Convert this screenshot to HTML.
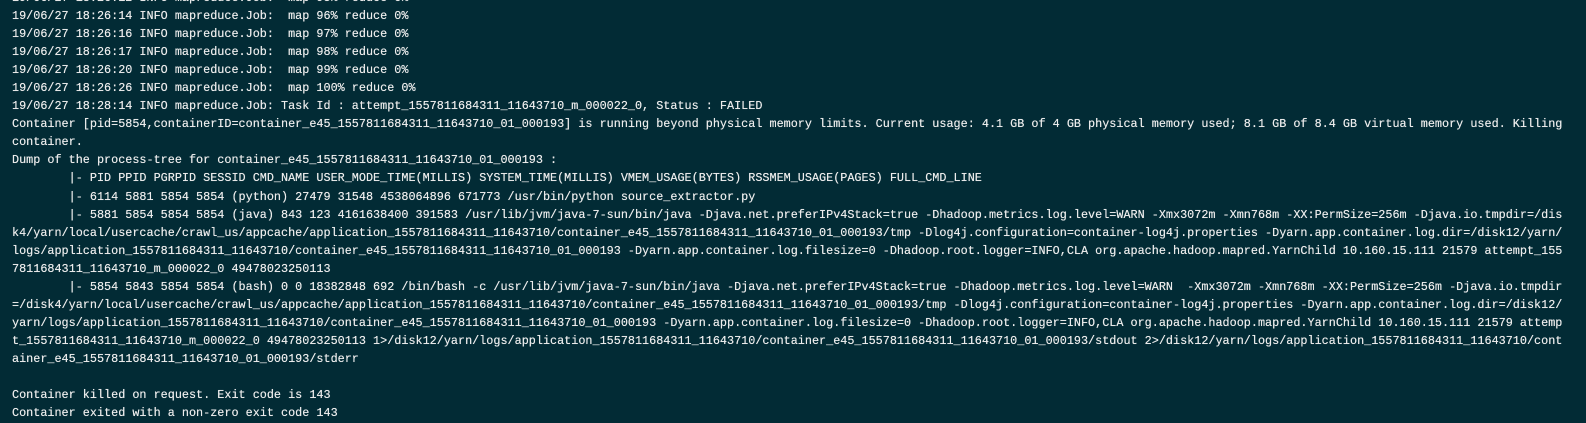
<!DOCTYPE html>
<html><head><style>
html,body{margin:0;padding:0;background:#022b35;width:1586px;height:423px;overflow:hidden}
pre{margin:0;position:absolute;left:12px;top:-11px;font-family:"Liberation Mono",monospace;font-size:11.8px;line-height:18.05px;color:#ececec;white-space:pre;text-shadow:0 0 0.4px #ececec}
</style></head><body>
<pre>19/06/27 18:26:12 INFO mapreduce.Job:  map 95% reduce 0%
19/06/27 18:26:14 INFO mapreduce.Job:  map 96% reduce 0%
19/06/27 18:26:16 INFO mapreduce.Job:  map 97% reduce 0%
19/06/27 18:26:17 INFO mapreduce.Job:  map 98% reduce 0%
19/06/27 18:26:20 INFO mapreduce.Job:  map 99% reduce 0%
19/06/27 18:26:26 INFO mapreduce.Job:  map 100% reduce 0%
19/06/27 18:28:14 INFO mapreduce.Job: Task Id : attempt_1557811684311_11643710_m_000022_0, Status : FAILED
Container [pid=5854,containerID=container_e45_1557811684311_11643710_01_000193] is running beyond physical memory limits. Current usage: 4.1 GB of 4 GB physical memory used; 8.1 GB of 8.4 GB virtual memory used. Killing
container.
Dump of the process-tree for container_e45_1557811684311_11643710_01_000193 :
        |- PID PPID PGRPID SESSID CMD_NAME USER_MODE_TIME(MILLIS) SYSTEM_TIME(MILLIS) VMEM_USAGE(BYTES) RSSMEM_USAGE(PAGES) FULL_CMD_LINE
        |- 6114 5881 5854 5854 (python) 27479 31548 4538064896 671773 /usr/bin/python source_extractor.py
        |- 5881 5854 5854 5854 (java) 843 123 4161638400 391583 /usr/lib/jvm/java-7-sun/bin/java -Djava.net.preferIPv4Stack=true -Dhadoop.metrics.log.level=WARN -Xmx3072m -Xmn768m -XX:PermSize=256m -Djava.io.tmpdir=/dis
k4/yarn/local/usercache/crawl_us/appcache/application_1557811684311_11643710/container_e45_1557811684311_11643710_01_000193/tmp -Dlog4j.configuration=container-log4j.properties -Dyarn.app.container.log.dir=/disk12/yarn/
logs/application_1557811684311_11643710/container_e45_1557811684311_11643710_01_000193 -Dyarn.app.container.log.filesize=0 -Dhadoop.root.logger=INFO,CLA org.apache.hadoop.mapred.YarnChild 10.160.15.111 21579 attempt_155
7811684311_11643710_m_000022_0 49478023250113
        |- 5854 5843 5854 5854 (bash) 0 0 18382848 692 /bin/bash -c /usr/lib/jvm/java-7-sun/bin/java -Djava.net.preferIPv4Stack=true -Dhadoop.metrics.log.level=WARN  -Xmx3072m -Xmn768m -XX:PermSize=256m -Djava.io.tmpdir
=/disk4/yarn/local/usercache/crawl_us/appcache/application_1557811684311_11643710/container_e45_1557811684311_11643710_01_000193/tmp -Dlog4j.configuration=container-log4j.properties -Dyarn.app.container.log.dir=/disk12/
yarn/logs/application_1557811684311_11643710/container_e45_1557811684311_11643710_01_000193 -Dyarn.app.container.log.filesize=0 -Dhadoop.root.logger=INFO,CLA org.apache.hadoop.mapred.YarnChild 10.160.15.111 21579 attemp
t_1557811684311_11643710_m_000022_0 49478023250113 1&gt;/disk12/yarn/logs/application_1557811684311_11643710/container_e45_1557811684311_11643710_01_000193/stdout 2&gt;/disk12/yarn/logs/application_1557811684311_11643710/cont
ainer_e45_1557811684311_11643710_01_000193/stderr

Container killed on request. Exit code is 143
Container exited with a non-zero exit code 143</pre>
</body></html>
